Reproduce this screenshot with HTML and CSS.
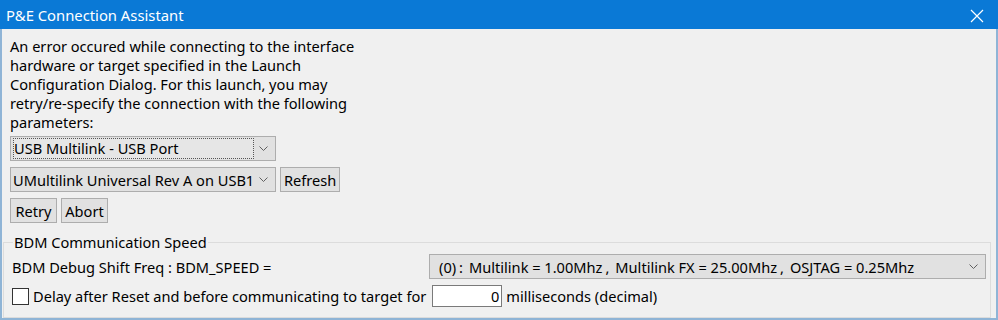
FILE: index.html
```html
<!DOCTYPE html>
<html lang="en">
<head>
    <meta charset="UTF-8">
    <title>P&amp;E Connection Assistant</title>
    <link rel="stylesheet" href="styles.css">
</head>
<body>
    <div class="window">
        <div class="titlebar">
            <span class="title">P&amp;E Connection Assistant</span>
            <span class="close">
                <svg width="14" height="14" viewBox="0 0 14 14"><path d="M1 1 L13 13 M13 1 L1 13" stroke="#fff" stroke-width="1.2" fill="none"/></svg>
            </span>
        </div>
        <div class="content">
            <p class="message">An error occured while connecting to the interface<br>hardware or target specified in the Launch<br>Configuration Dialog. For this launch, you may<br>retry/re-specify the connection with the following<br>parameters:</p>

            <div class="row">
                <div class="combo combo-wide focused">
                    <span class="combo-text">USB Multilink - USB Port</span>
                    <span class="arrow"><svg width="9" height="5" viewBox="0 0 9 5"><path d="M0.5 0.5 L4.5 4.5 L8.5 0.5" stroke="#606060" fill="none"/></svg></span>
                </div>
            </div>
            <div class="row">
                <div class="combo combo-wide">
                    <span class="combo-text">UMultilink Universal Rev A on USB1</span>
                    <span class="arrow"><svg width="9" height="5" viewBox="0 0 9 5"><path d="M0.5 0.5 L4.5 4.5 L8.5 0.5" stroke="#606060" fill="none"/></svg></span>
                </div>
                <button class="btn btn-refresh">Refresh</button>
            </div>
            <div class="row">
                <button class="btn btn-small">Retry</button>
                <button class="btn btn-small">Abort</button>
            </div>

            <fieldset class="group">
                <legend>BDM Communication Speed</legend>
                <div class="speed-row">
                    <span class="label">BDM Debug Shift Freq : BDM_SPEED =</span>
                    <div class="combo combo-speed">
                        <span class="combo-text">(0)<span class="sep">:</span>Multilink = 1.00Mhz<span class="sep">,</span>Multilink FX = 25.00Mhz<span class="sep">,</span>OSJTAG = 0.25Mhz</span>
                        <span class="arrow"><svg width="9" height="5" viewBox="0 0 9 5"><path d="M0.5 0.5 L4.5 4.5 L8.5 0.5" stroke="#606060" fill="none"/></svg></span>
                    </div>
                </div>
                <div class="delay-row">
                    <span class="checkbox"></span>
                    <span class="label">Delay after Reset and before communicating to target for</span>
                    <span class="num-input">0</span>
                    <span class="label">milliseconds (decimal)</span>
                </div>
            </fieldset>
        </div>
    </div>
</body>
</html>
```

FILE: styles.css
```css
body {
    margin: 0;
    font-family: 'Noto Sans', 'Open Sans', sans-serif;
    font-size: 14.6px;
    color: #000;
    background-color: #f0f0f0;
}
.window {
    width: 998px;
    height: 320px;
    box-sizing: border-box;
    border-left: 2px solid #8fb4d6;
    border-right: 2px solid #8fb4d6;
    border-bottom: 2px solid #8fb4d6;
    background-color: #f0f0f0;
    display: flex;
    flex-direction: column;
}
.titlebar {
    height: 29px;
    margin: 0 -2px;
    background-color: #0a79d6;
    color: white;
    display: flex;
    align-items: center;
    justify-content: space-between;
    padding: 0 14px 0 6px;
}
.title {
    font-size: 14.8px;
}
.close {
    display: flex;
    margin-top: 2px;
}
.content {
    padding: 8px 0 0 8px;
    flex: 1;
    display: flex;
    flex-direction: column;
}
.message {
    margin: 0 0 4px 0;
    line-height: 19px;
    white-space: nowrap;
}
.row {
    display: flex;
    gap: 4px;
    margin-bottom: 6px;
}
.combo {
    height: 25px;
    box-sizing: border-box;
    background-color: #e1e1e1;
    border: 1px solid #adadad;
    display: flex;
    align-items: center;
    padding: 0 2px;
}
.combo-wide {
    width: 266px;
}
.combo-text {
    flex: 1;
    white-space: nowrap;
    overflow: hidden;
}
.focused .combo-text {
    border: 1px dotted #555;
    background-color: #e6e6e6;
    line-height: 19px;
    margin-right: 3px;
}
.arrow {
    width: 12px;
    display: flex;
    justify-content: center;
    margin-right: 4px;
}
.btn {
    font-family: inherit;
    font-size: 14.6px;
    height: 25px;
    padding: 0 3px;
    background-color: #e1e1e1;
    border: 1px solid #adadad;
    border-radius: 0;
    color: #000;
}
.btn-small {
    width: 47px;
    padding: 0;
}
.btn-refresh {
    width: 60px;
}
.group {
    margin: 4px 5px 0 -7px;
    border: 1px solid #dcdcdc;
    padding: 0 4px 5px 8px;
    flex: 1;
}
.group legend {
    padding: 0 1px;
    margin-left: 1px;
    line-height: 19px;
}
.speed-row {
    display: flex;
    align-items: center;
    justify-content: space-between;
    margin-top: 2px;
}
.combo-speed {
    width: 557px;
    padding-left: 9px;
}
.sep {
    margin: 0 6px 0 3px;
}
.delay-row {
    display: flex;
    align-items: center;
    margin-top: 6px;
    gap: 4px;
}
.checkbox {
    width: 15px;
    height: 15px;
    border: 1px solid #333;
    background-color: white;
}
.num-input {
    width: 70px;
    height: 22px;
    box-sizing: border-box;
    border: 1px solid #7a7a7a;
    background-color: white;
    text-align: right;
    padding-right: 2px;
    line-height: 20px;
    margin-left: 2px;
}
```
